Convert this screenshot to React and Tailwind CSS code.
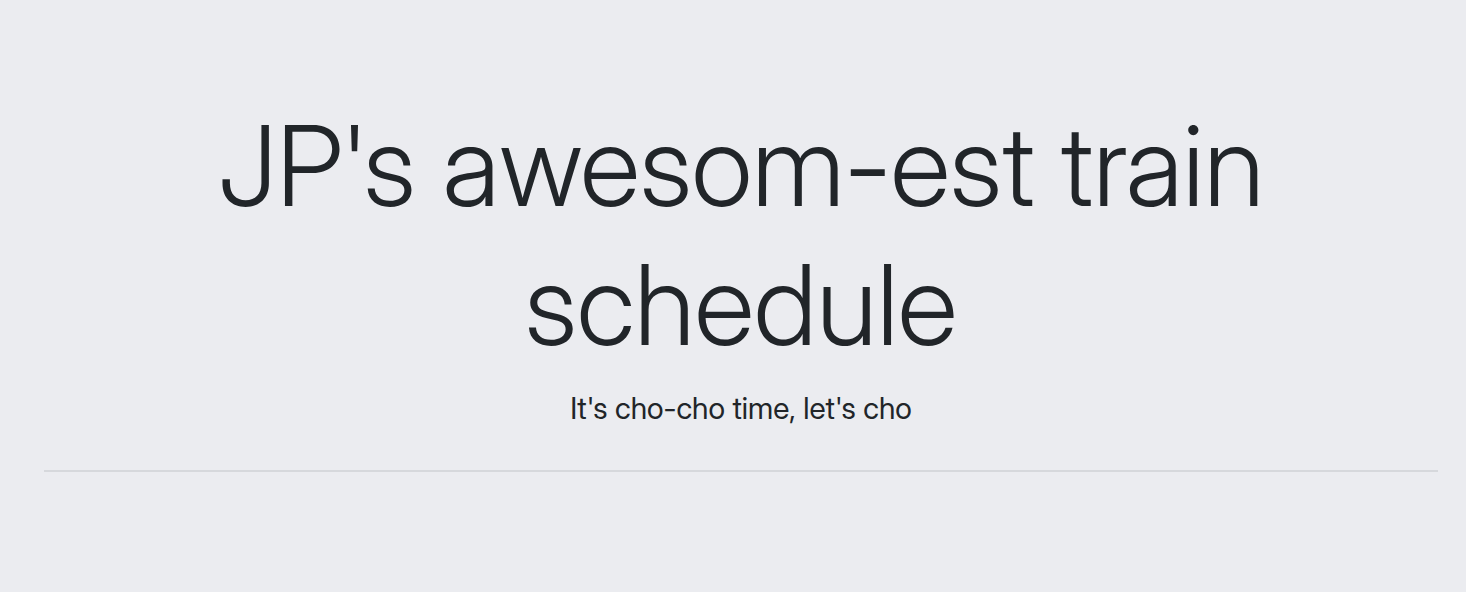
export default function App() {
  return (
    <main className="min-h-screen bg-[#ebecf0] pt-24 pr-7 pl-11 font-['Inter_Display','Inter',sans-serif] text-[#212529]">
      <header className="text-center">
        <h1 className="text-[112px] leading-[139px] font-light">
          JP's awesom-est train schedule
        </h1>
        <p className="mt-3 text-[30px] leading-[44px]">It's cho-cho time, let's cho</p>
      </header>
      <hr className="mt-10 border-t-2 border-[#d6d8dc]" />
    </main>
  );
}
